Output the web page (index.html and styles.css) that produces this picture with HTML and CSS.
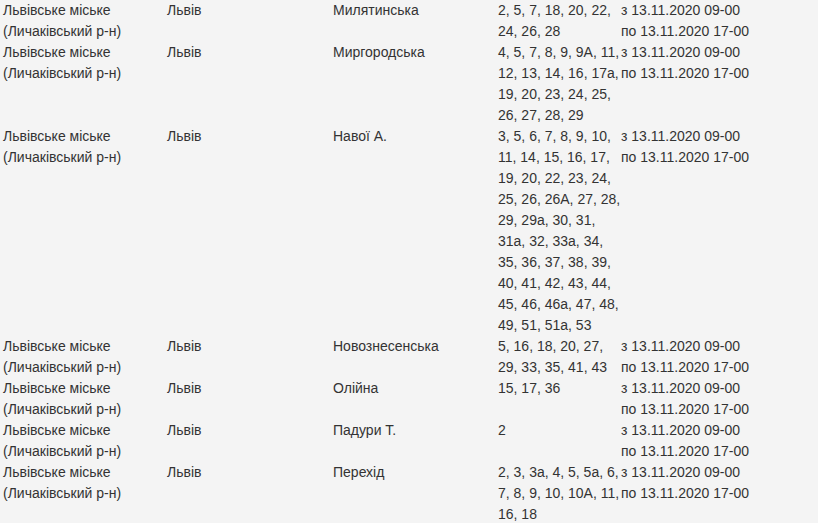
FILE: index.html
```html
<!DOCTYPE html>
<html lang="uk">
<head>
<meta charset="utf-8">
<title>Відключення</title>
<link rel="stylesheet" href="styles.css">
</head>
<body>
<table class="outages">
  <colgroup>
    <col class="c-district">
    <col class="c-city">
    <col class="c-street">
    <col class="c-houses">
    <col class="c-time">
  </colgroup>
  <tbody>
    <tr>
      <td>Львівське міське (Личаківський р-н)</td>
      <td>Львів</td>
      <td>Милятинська</td>
      <td>2, 5, 7, 18, 20, 22, 24, 26, 28</td>
      <td class="time">з 13.11.2020 09-00<br>по 13.11.2020 17-00</td>
    </tr>
    <tr>
      <td>Львівське міське (Личаківський р-н)</td>
      <td>Львів</td>
      <td>Миргородська</td>
      <td>4, 5, 7, 8, 9, 9А, 11, 12, 13, 14, 16, 17а, 19, 20, 23, 24, 25, 26, 27, 28, 29</td>
      <td class="time">з 13.11.2020 09-00<br>по 13.11.2020 17-00</td>
    </tr>
    <tr>
      <td>Львівське міське (Личаківський р-н)</td>
      <td>Львів</td>
      <td>Навої А.</td>
      <td>3, 5, 6, 7, 8, 9, 10, 11, 14, 15, 16, 17, 19, 20, 22, 23, 24, 25, 26, 26А, 27, 28, 29, 29а, 30, 31, 31а, 32, 33а, 34, 35, 36, 37, 38, 39, 40, 41, 42, 43, 44, 45, 46, 46а, 47, 48, 49, 51, 51а, 53</td>
      <td class="time">з 13.11.2020 09-00<br>по 13.11.2020 17-00</td>
    </tr>
    <tr>
      <td>Львівське міське (Личаківський р-н)</td>
      <td>Львів</td>
      <td>Новознесенська</td>
      <td>5, 16, 18, 20, 27, 29, 33, 35, 41, 43</td>
      <td class="time">з 13.11.2020 09-00<br>по 13.11.2020 17-00</td>
    </tr>
    <tr>
      <td>Львівське міське (Личаківський р-н)</td>
      <td>Львів</td>
      <td>Олійна</td>
      <td>15, 17, 36</td>
      <td class="time">з 13.11.2020 09-00<br>по 13.11.2020 17-00</td>
    </tr>
    <tr>
      <td>Львівське міське (Личаківський р-н)</td>
      <td>Львів</td>
      <td>Падури Т.</td>
      <td>2</td>
      <td class="time">з 13.11.2020 09-00<br>по 13.11.2020 17-00</td>
    </tr>
    <tr>
      <td>Львівське міське (Личаківський р-н)</td>
      <td>Львів</td>
      <td>Перехід</td>
      <td>2, 3, 3а, 4, 5, 5а, 6, 7, 8, 9, 10, 10А, 11, 16, 18</td>
      <td class="time">з 13.11.2020 09-00<br>по 13.11.2020 17-00</td>
    </tr>
  </tbody>
</table>
</body>
</html>
```

FILE: styles.css
```css
html, body {
  margin: 0;
  padding: 0;
  background: #f4f4f4;
}

body {
  font-family: "Liberation Sans", Arial, sans-serif;
  font-size: 14px;
  line-height: 21px;
  color: #333333;
  overflow: hidden;
}

.outages {
  border-collapse: collapse;
  table-layout: fixed;
  width: 830px;
}

.outages td {
  padding: 0 0 0 3px;
  vertical-align: top;
  text-align: left;
}

.outages td.time {
  padding-left: 0;
}

.c-district { width: 164px; }
.c-city { width: 166px; }
.c-street { width: 165px; }
.c-houses { width: 126px; }
.c-time { width: 209px; }
```
